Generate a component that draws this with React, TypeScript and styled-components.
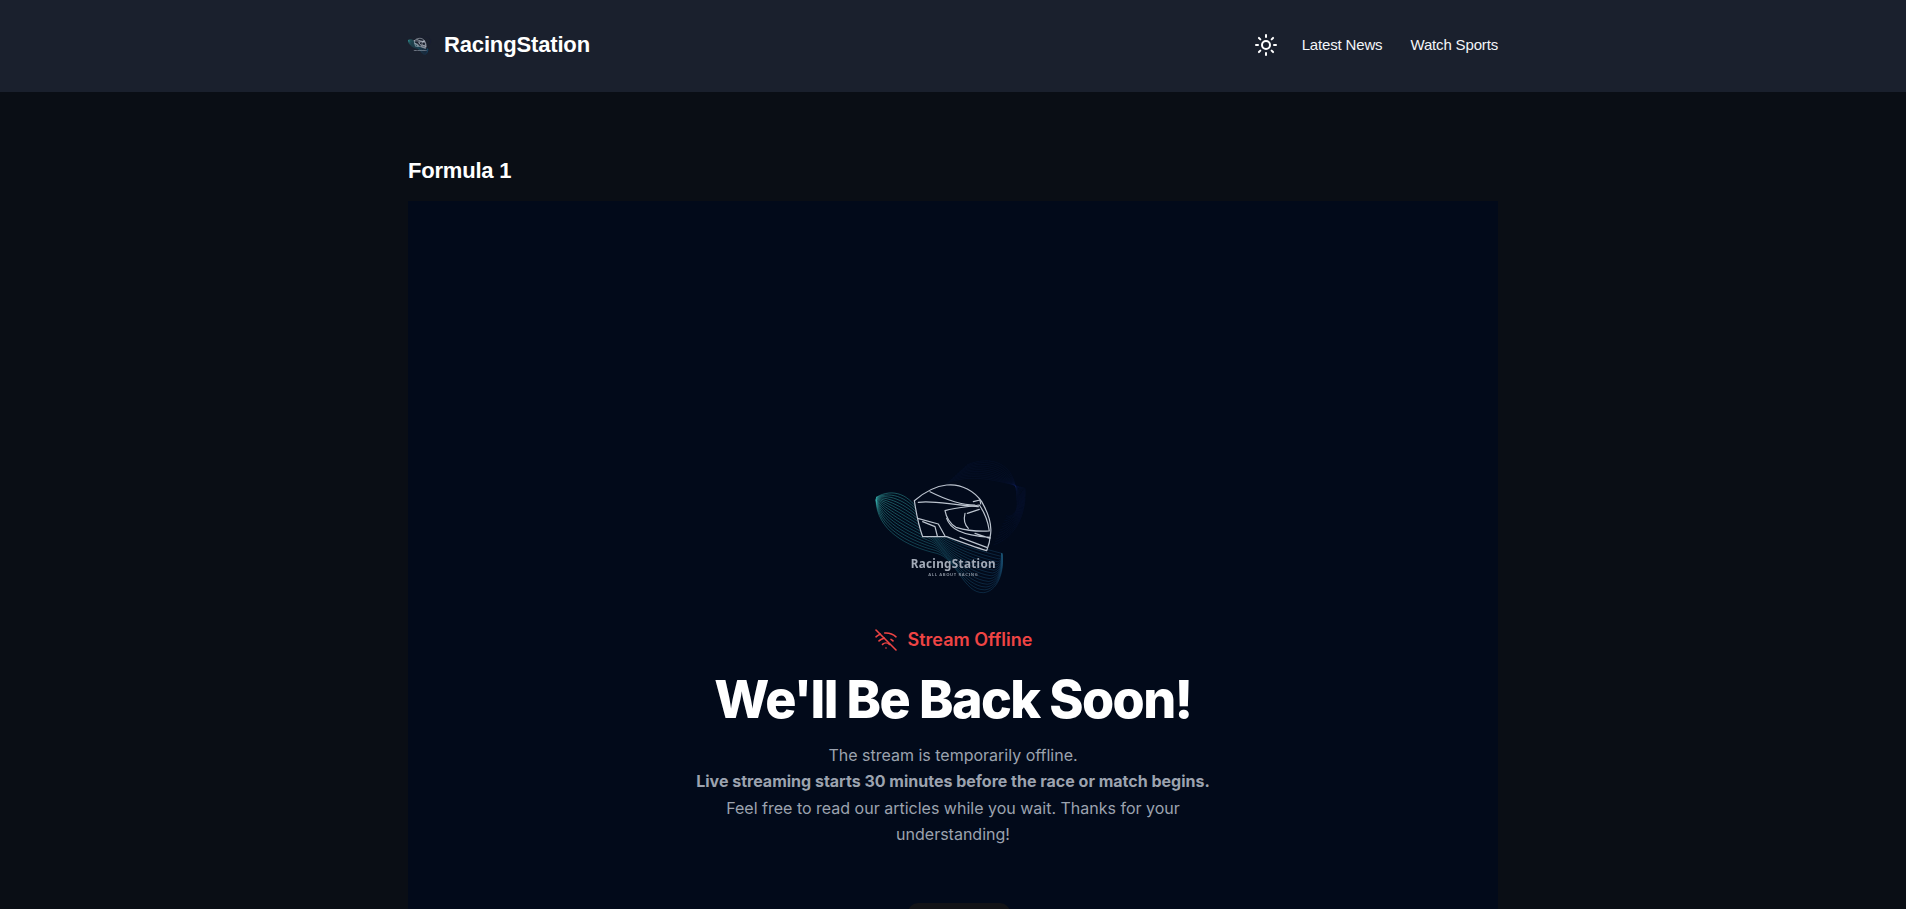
import { Sun, WifiOff } from 'lucide-react'
import styled, { createGlobalStyle } from 'styled-components'

const GlobalStyle = createGlobalStyle`
    html, body {
        margin: 0;
        height: 100%;
        overflow: hidden;
        background: #0a0e15;
    }

    * {
        box-sizing: border-box;
    }
`

// ribbon edges, each row is one cubic segment, lines in between are interpolated
const ribbonTop = [78, 142, 130, 112, 180, 135, 210, 190, 240, 250, 340, 280, 455, 310]
const ribbonBottom = [78, 150, 80, 240, 170, 290, 260, 310, 320, 325, 340, 430, 400, 428]
const ribbonEnd = [440, 425, 465, 370, 455, 310]

const ribbonLines = Array.from({ length: 15 }, (_, i) => {
    const t = i / 14
    const p = ribbonTop.map((v, n) => v + (ribbonBottom[n] - v) * t)
    const tail = ribbonEnd.map((v, n) => v + ([455, 310, 455, 310, 455, 310][n] - v) * (1 - t))
    return `M${p[0]},${p[1]} C${p[2]},${p[3]} ${p[4]},${p[5]} ${p[6]},${p[7]} C${p[8]},${p[9]} ${p[10]},${p[11]} ${p[12]},${p[13]} C${tail[0]},${tail[1]} ${tail[2]},${tail[3]} ${tail[4]},${tail[5]}`
})

// faint blue mesh behind the helmet
const veilLines = Array.from({ length: 11 }, (_, i) => {
    const t = i / 10
    const y = 100 - 55 * t
    const x = 290 + 60 * t
    return `M${x},${y} C${x + 70},${y - 30} ${x + 150},${y - 10} ${525 - 25 * t},${115 + 30 * t} C${530 - 20 * t},${190 + 20 * t} ${500 - 40 * t},${260 - 60 * t} ${430 + 40 * t},${285 - 90 * t}`
})

function LogoMark({
    width,
    height,
    viewBox,
    compact = false,
}: {
    width: number
    height: number
    viewBox: string
    compact?: boolean
}) {
    const gradientId = compact ? 'ribbonSmall' : 'ribbon'
    return (
        <LogoSvg width={width} height={height} viewBox={viewBox}>
            <defs>
                <linearGradient id={gradientId} x1="0" y1="0" x2="1" y2="1">
                    <stop offset="0" stopColor="#36b3b0" />
                    <stop offset="0.5" stopColor="#1f6f80" />
                    <stop offset="1" stopColor="#143f66" />
                </linearGradient>
            </defs>
            {veilLines.map((d) => (
                <path key={d} d={d} fill="none" stroke="#1b2f78" strokeWidth="1.2" opacity="0.28" />
            ))}
            {ribbonLines.map((d) => (
                <path
                    key={d}
                    d={d}
                    fill="none"
                    stroke={`url(#${gradientId})`}
                    strokeWidth={compact ? 8 : 2}
                    opacity={compact ? 0.38 : 0.72}
                />
            ))}
            <g
                fill={compact ? 'none' : '#020a1b'}
                stroke="#bcc4cf"
                strokeWidth={compact ? 11 : 3.6}
                strokeLinejoin="round"
                strokeLinecap="round"
            >
                <path d="M193,152 C225,125 260,108 290,105 C335,100 375,125 395,155 C415,190 425,225 422,250 C420,275 415,290 410,302 C370,290 330,275 290,260 L218,260 C205,225 198,185 193,152 Z" />
                <path fill="none" d="M205,157 C250,150 300,165 385,170" />
                <path fill="none" d="M240,125 C290,150 340,165 375,165" />
                <path fill="none" d="M285,182 C320,172 360,170 388,165 C405,190 415,220 418,243 C385,245 345,240 318,232 C300,222 288,200 285,182 Z" />
                <path fill="none" d="M345,190 C340,210 345,225 355,235 M352,190 L388,178" />
                <path fill="none" d="M203,205 L265,222 L285,258 M218,215 L255,230 L262,258" />
                <path fill="none" d="M290,205 C300,235 330,255 420,262 M375,250 L420,265 M330,262 L410,292" />
                <path fill="none" d="M370,155 L390,150 L392,162" />
            </g>
            <LogoName x="310" y="354" textAnchor="middle">
                RacingStation
            </LogoName>
            <LogoTagline x="310" y="378" textAnchor="middle">
                ALL ABOUT RACING
            </LogoTagline>
        </LogoSvg>
    )
}

export default function App() {
    return (
        <>
            <GlobalStyle />
            <Header>
                <HeaderInner>
                    <Brand>
                        <LogoMark width={24} height={20} viewBox="70 40 470 392" compact />
                        <BrandName>RacingStation</BrandName>
                    </Brand>
                    <Nav>
                        <ThemeButton aria-label="Toggle theme">
                            <Sun size={24} strokeWidth={2} />
                        </ThemeButton>
                        <NavLink>Latest News</NavLink>
                        <NavLink>Watch Sports</NavLink>
                    </Nav>
                </HeaderInner>
            </Header>
            <Main>
                <PageTitle>Formula 1</PageTitle>
                <Player>
                    <LogoMark width={200} height={160} viewBox="9 0 600 480" />
                    <Status>
                        <WifiOff size={24} strokeWidth={1.6} />
                        <span>Stream Offline</span>
                    </Status>
                    <Heading>We'll Be Back Soon!</Heading>
                    <Message>
                        The stream is temporarily offline.
                        <br />
                        <strong>Live streaming starts 30 minutes before the race or match begins.</strong>
                        <br />
                        Feel free to read our articles while you wait. Thanks for your understanding!
                    </Message>
                    <ActionButton aria-label="Read articles" />
                </Player>
            </Main>
        </>
    )
}

const Header = styled.header`
    height: 92px;
    padding-bottom: 2px;
    background: #1a202d;
`

const HeaderInner = styled.div`
    width: 1090px;
    height: 100%;
    margin: 0 auto;
    display: flex;
    align-items: center;
    justify-content: space-between;
`

const Brand = styled.div`
    display: flex;
    align-items: center;
    gap: 12px;
`

const BrandName = styled.span`
    font-family: 'Liberation Sans', Arial, sans-serif;
    font-weight: 700;
    font-size: 22px;
    line-height: 28px;
    letter-spacing: -0.15px;
    color: #fff;
`

const Nav = styled.nav`
    display: flex;
    align-items: center;
    gap: 24px;
`

const ThemeButton = styled.button`
    display: flex;
    padding: 0;
    border: 0;
    background: none;
    color: #fff;
`

const NavLink = styled.a`
    font-family: 'Liberation Sans', Arial, sans-serif;
    font-size: 15px;
    line-height: 20px;
    letter-spacing: -0.16px;
    color: #f3f5f8;

    & + & {
        margin-left: 4px;
    }
`

const Main = styled.main`
    width: 1090px;
    margin: 0 auto;
    padding-top: 65px;
`

const PageTitle = styled.h1`
    margin: 0 0 16px;
    font-family: 'Liberation Sans', Arial, sans-serif;
    font-weight: 700;
    font-size: 22px;
    line-height: 28px;
    letter-spacing: -0.2px;
    color: #fff;
`

const Player = styled.section`
    display: flex;
    flex-direction: column;
    align-items: center;
    padding-top: 249px;
    padding-bottom: 240px;
    background: #020a1a;
`

const LogoSvg = styled.svg`
    display: block;
    flex-shrink: 0;
    filter: blur(0.45px);
`

const LogoName = styled.text`
    font-family: 'Noto Sans', sans-serif;
    font-weight: 700;
    font-size: 35px;
    letter-spacing: 1px;
    fill: #a3abb8;
`

const LogoTagline = styled.text`
    font-family: 'Noto Sans', sans-serif;
    font-weight: 700;
    font-size: 12.5px;
    letter-spacing: 1.8px;
    fill: #858d9a;
`

const Status = styled.div`
    display: flex;
    align-items: center;
    gap: 10px;
    margin-top: 16px;
    font-family: Inter, sans-serif;
    font-weight: 600;
    font-size: 18px;
    line-height: 28px;
    color: #ef4444;
`

const Heading = styled.h2`
    margin: 16px 0 0;
    font-family: Inter, sans-serif;
    font-weight: 800;
    font-size: 52px;
    line-height: 60px;
    letter-spacing: -1.6px;
    color: #fff;
`

const Message = styled.p`
    width: 530px;
    margin: 12px 0 0;
    font-family: Inter, sans-serif;
    font-size: 16px;
    line-height: 26.4px;
    text-align: center;
    color: #9ca3af;

    strong {
        font-weight: 700;
    }
`

const ActionButton = styled.button`
    width: 102px;
    height: 44px;
    margin-top: 55px;
    margin-left: 12px;
    border: 0;
    border-radius: 10px;
    background: #121317;
`
